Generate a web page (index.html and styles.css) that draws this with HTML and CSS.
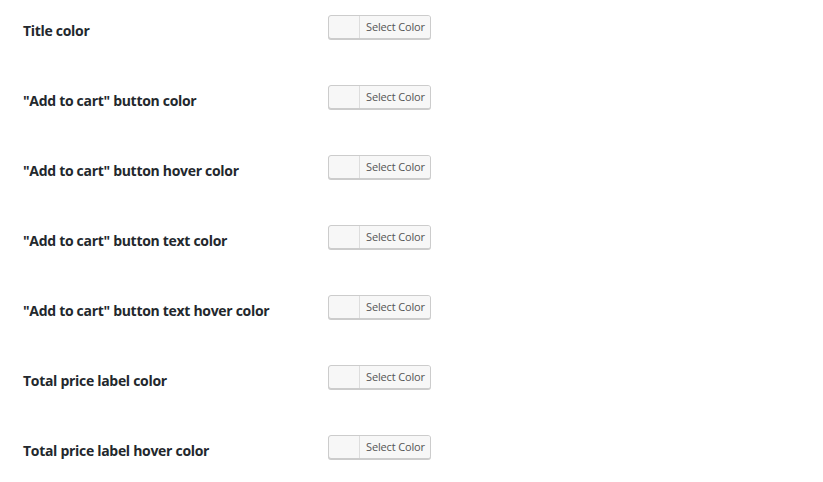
FILE: index.html
```html
<!DOCTYPE html>
<html lang="en">
<head>
    <meta charset="UTF-8">
    <meta name="viewport" content="width=device-width, initial-scale=1.0">
    <title>Color Settings</title>
    <link rel="stylesheet" href="styles.css">
</head>
<body>
    <div class="form-table">
        <div class="row">
            <div class="label">Title color</div>
            <div class="field"><button class="color-result"><span class="swatch"></span><span class="text">Select Color</span></button></div>
        </div>
        <div class="row">
            <div class="label">"Add to cart" button color</div>
            <div class="field"><button class="color-result"><span class="swatch"></span><span class="text">Select Color</span></button></div>
        </div>
        <div class="row">
            <div class="label">"Add to cart" button hover color</div>
            <div class="field"><button class="color-result"><span class="swatch"></span><span class="text">Select Color</span></button></div>
        </div>
        <div class="row">
            <div class="label">"Add to cart" button text color</div>
            <div class="field"><button class="color-result"><span class="swatch"></span><span class="text">Select Color</span></button></div>
        </div>
        <div class="row">
            <div class="label">"Add to cart" button text hover color</div>
            <div class="field"><button class="color-result"><span class="swatch"></span><span class="text">Select Color</span></button></div>
        </div>
        <div class="row">
            <div class="label">Total price label color</div>
            <div class="field"><button class="color-result"><span class="swatch"></span><span class="text">Select Color</span></button></div>
        </div>
        <div class="row">
            <div class="label">Total price label hover color</div>
            <div class="field"><button class="color-result"><span class="swatch"></span><span class="text">Select Color</span></button></div>
        </div>
    </div>
</body>
</html>
```

FILE: styles.css
```css
body {
    margin: 0;
    padding: 0;
    background-color: #ffffff;
    font-family: 'Open Sans', 'Noto Sans', sans-serif;
    color: #23282d;
}

.form-table {
    padding-left: 23px;
}

.row {
    display: flex;
    height: 70px;
}

.label {
    width: 305px;
    padding-top: 21px;
    font-size: 14px;
    font-weight: 700;
    line-height: 19px;
    letter-spacing: -0.3px;
}

.field {
    padding-top: 15px;
}

.color-result {
    display: flex;
    align-items: stretch;
    height: 24px;
    margin: 0;
    padding: 0;
    background-color: #f7f7f7;
    border: 1px solid #cccccc;
    border-radius: 3px;
    box-shadow: 0 1px 0 #cccccc;
    cursor: pointer;
}

.swatch {
    width: 30px;
}

.text {
    padding: 0 5px 0 6px;
    border-left: 1px solid #dddddd;
    font-family: 'Open Sans', 'Noto Sans', sans-serif;
    font-size: 11px;
    line-height: 22px;
    letter-spacing: -0.15px;
    color: #555555;
    background-color: #f7f7f7;
    border-radius: 0 2px 2px 0;
}
```
